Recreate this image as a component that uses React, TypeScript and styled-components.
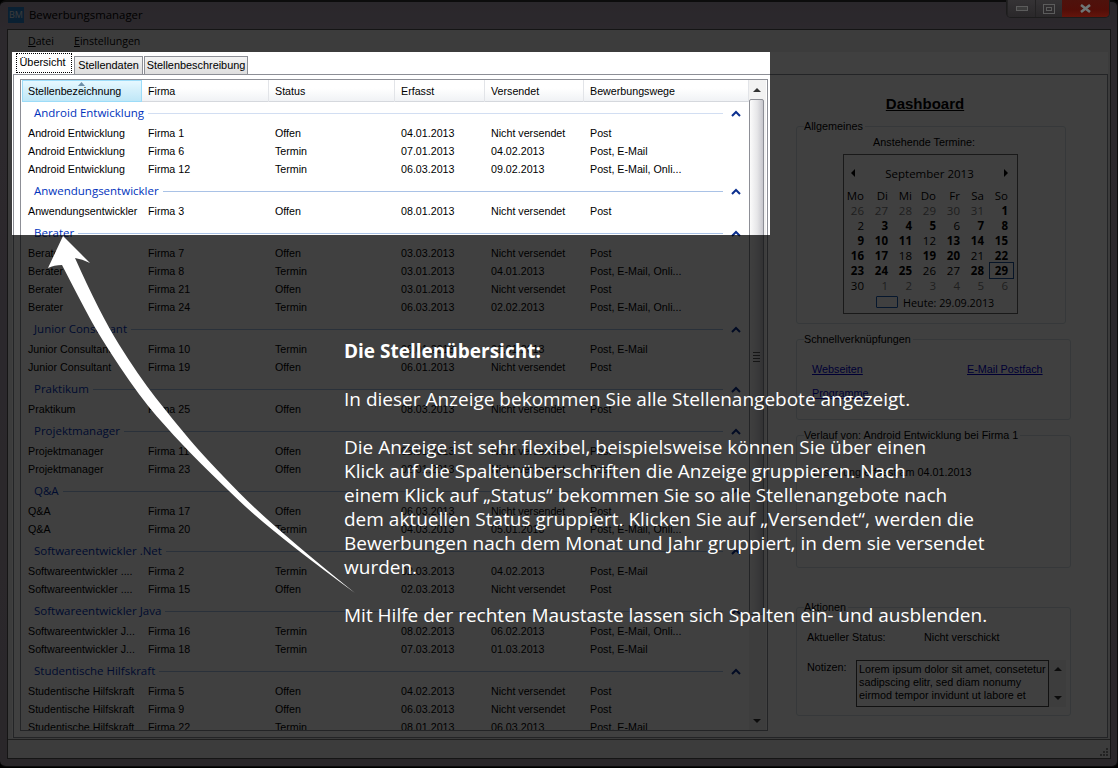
import React from 'react'
import styled, { createGlobalStyle } from 'styled-components'

const GlobalStyle = createGlobalStyle`
    html, body {
        margin: 0;
        background: #000;
    }
    body {
        font-family: "Liberation Sans", Arial, sans-serif;
        font-size: 10.7px;
        color: #000;
    }
`

const Screen = styled.div`
    position: relative;
    width: 1118px;
    height: 768px;
    overflow: hidden;
`

const Frame = styled.div`
    box-sizing: border-box;
    height: 767px;
    display: flex;
    flex-direction: column;
    padding: 0 6px 7px 7px;
    background: linear-gradient(#a89bab, #b0a3b4 30px, #a89ca8);
    border-radius: 6px;
    border: 1px solid #303030;
    border-left-width: 0;
    border-top-width: 2px;
`

const TitleBar = styled.div`
    height: 27px;
    display: flex;
    justify-content: space-between;
    align-items: flex-start;
`

const TitleLeft = styled.div`
    display: flex;
    align-items: center;
    gap: 5px;
    padding: 5px 0 0 1px;
    font-family: "Open Sans", sans-serif;
    font-size: 11.4px;
    line-height: 16px;
`

const AppIcon = styled.span`
    width: 16px;
    height: 16px;
    background: #2a7fc8;
    color: #e8e8e8;
    font-size: 9px;
    line-height: 16px;
    text-align: center;
`

const Controls = styled.div`
    position: relative;
    z-index: 2;
    display: flex;
    height: 17px;
    margin-top: -2px;
    margin-right: 1px;
    border: 1px solid #1c1c1c;
    border-top: 0;
    border-radius: 0 0 5px 5px;
    overflow: hidden;
`

const WinButton = styled.div<{ $w: number; $close?: boolean }>`
    width: ${p => p.$w}px;
    display: flex;
    align-items: center;
    justify-content: center;
    background: ${p => (p.$close ? 'linear-gradient(#4e120c, #520e08 55%, #64150c)' : 'linear-gradient(#353335, #2a282a)')};
    border-left: ${p => (p.$close ? '0' : '1px solid #232223')};
`

const Content = styled.div`
    flex: 1;
    display: flex;
    flex-direction: column;
    background: #f0f0f0;
    border: 1px solid #555;
    min-height: 0;
`

const MenuBar = styled.div`
    height: 22px;
    display: flex;
    align-items: center;
    gap: 20px;
    padding-left: 20px;
    font-family: "Open Sans", sans-serif;
    font-size: 10.6px;
`

const Body = styled.div`
    height: 686px;
    margin: 0 2px 0 4px;
    padding-left: 1px;
    background: #fff;
    display: flex;
    flex-direction: column;
`

const TabStrip = styled.div`
    height: 22px;
    display: flex;
    align-items: flex-end;
    padding-left: 3px;
    gap: 1px;
`

const Tab = styled.div<{ $active?: boolean; $w: number }>`
    box-sizing: border-box;
    width: ${p => p.$w}px;
    height: ${p => (p.$active ? 20 : 19)}px;
    margin-right: ${p => (p.$active ? 1 : 0)}px;
    margin-bottom: ${p => (p.$active ? 1 : -1)}px;
    padding-right: ${p => (p.$active ? 3 : 0)}px;
    line-height: 17px;
    text-align: center;
    font-size: 10.9px;
    background: ${p => (p.$active ? '#fff' : 'linear-gradient(#f4f4f4, #dcdcdc)')};
    border: ${p => (p.$active ? '1px dotted #000' : '1.5px solid #8d8f96')};
    border-bottom: ${p => (p.$active ? '1px dotted #000' : '0')};
`

const TabPanel = styled.div`
    flex: 1;
    display: flex;
    border: 1px solid #8d8f96;
    min-height: 0;
`

const ListBox = styled.div`
    box-sizing: border-box;
    width: 748px;
    height: 652px;
    margin: 4px 0 0 6px;
    padding-left: 1px;
    display: flex;
    border: 1px solid #8d8f96;
    flex-shrink: 0;
`

const ListMain = styled.div`
    width: 727px;
    overflow: hidden;
`

const Columns = `
    display: grid;
    grid-template-columns: 120px 127px 126px 90px 99px 165px;
`

const HeaderRow = styled.div`
    ${Columns}
    height: 22px;
    background: linear-gradient(#fff, #fff 40%, #f0f2f5);
    border-bottom: 1px solid #d5d8dd;
    box-sizing: border-box;
`

const HeaderCell = styled.div<{ $sorted?: boolean }>`
    position: relative;
    box-sizing: border-box;
    padding-left: 6px;
    line-height: 22px;
    border-right: 1px solid #e2e4e8;
    ${p => p.$sorted && `
        background: linear-gradient(#e6f8ff, #d4f0fb 45%, #bfe7f7);
        border: 1px solid #9ddcf8;
        padding-left: 5px;
        line-height: 20px;
    `}
    &:last-child {
        border-right: 0;
    }
`

const SortMark = styled.svg`
    position: absolute;
    left: 55px;
    top: 1px;
    width: 7px;
    height: 4px;
`

const Group = styled.section`
    margin-bottom: 2px;
`

const GroupHead = styled.div`
    height: 22px;
    display: flex;
    align-items: center;
    padding-left: 12px;
`

const GroupTitle = styled.span`
    font-family: "Open Sans", sans-serif;
    font-size: 11.5px;
    line-height: 20px;
    margin: 0 4px 1px 0;
    color: #0033bc;
`

const GroupLine = styled.span<{ $first?: boolean }>`
    flex: 1;
    height: 1px;
    background: ${p => (p.$first ? '#d2def2' : '#a9c2e6')};
`

const ChevronSlot = styled.span`
    width: 26px;
    display: flex;
    justify-content: center;
`

const Row = styled.div`
    ${Columns}
    height: 18px;
    line-height: 18px;
`

const Cell = styled.div`
    padding-left: 6px;
    white-space: nowrap;
    overflow: hidden;
`

const ScrollTrack = styled.div`
    width: 17px;
    display: flex;
    flex-direction: column;
    align-items: flex-start;
    background: #f2f2f2;
`

const ScrollArrow = styled.div`
    width: 16px;
    height: 19px;
    display: flex;
    align-items: center;
    justify-content: center;
    flex-shrink: 0;
`

const ScrollThumb = styled.div`
    box-sizing: border-box;
    width: 15px;
    height: 516px;
    border: 1px solid #8d8f96;
    border-radius: 2px;
    background: linear-gradient(90deg, #fbfbfb, #e6e6e8 55%, #c6c6cc);
    display: flex;
    flex-direction: column;
    justify-content: center;
    align-items: center;
    gap: 2px;
    margin-bottom: auto;
`

const GripLine = styled.span`
    width: 7px;
    height: 1px;
    background: #555;
`

const SidePane = styled.div`
    flex: 1;
    padding-left: 28px;
    font-size: 10.8px;
`

const Heading = styled.div`
    width: 258px;
    margin-top: 21px;
    text-align: center;
    font-size: 15px;
    line-height: 16px;
    font-weight: bold;
    text-decoration: underline;
`

const Box = styled.div<{ $w: number; $h: number; $top: number }>`
    box-sizing: border-box;
    width: ${p => p.$w}px;
    height: ${p => p.$h}px;
    margin-top: ${p => p.$top}px;
    border: 1px solid #d5dfe5;
    border-radius: 3px;
`

const Legend = styled.div`
    width: fit-content;
    height: 14px;
    line-height: 14px;
    margin: -8px 0 0 7px;
    background: #fff;
    padding-right: 2px;
`

const CalendarLabel = styled.div`
    width: 162px;
    margin: 2px 0 0 46px;
    text-align: center;
    line-height: 14px;
`

const Calendar = styled.div`
    box-sizing: border-box;
    width: 175px;
    height: 160px;
    margin: 5px 0 0 46px;
    border: 1px solid #666;
    font-family: "Open Sans", sans-serif;
    font-size: 11.5px;
`

const CalendarNav = styled.div`
    height: 33px;
    display: flex;
    align-items: center;
    justify-content: space-between;
    padding: 3px 9px 0 7px;
    box-sizing: border-box;
`

const CalendarGrid = styled.div`
    display: grid;
    grid-template-columns: 20px repeat(6, 24px);
    grid-auto-rows: 15px;
    line-height: 15px;
    text-align: right;
`

const Day = styled.div<{ $muted?: boolean; $bold?: boolean; $today?: boolean }>`
    position: relative;
    white-space: nowrap;
    color: ${p => (p.$muted ? '#7c7c7c' : '#000')};
    font-weight: ${p => (p.$bold ? 700 : 400)};
    ${p => p.$today && `
        &::after {
            content: "";
            position: absolute;
            top: -1px;
            bottom: -1px;
            left: 5px;
            right: -6px;
            border: 1px solid #1a4f9c;
        }
    `}
`

const TodayRow = styled.div`
    height: 18px;
    display: flex;
    align-items: center;
    gap: 5px;
    padding-left: 32px;
    font-size: 10.8px;
`

const TodayMark = styled.span`
    box-sizing: border-box;
    width: 22px;
    height: 12px;
    border: 1px solid #1a5bb4;
    border-radius: 1px;
`

const LinkGrid = styled.div`
    display: grid;
    grid-template-columns: 155px auto;
    grid-auto-rows: 24px;
    align-items: center;
    padding: 11px 0 0 15px;
`

const LinkText = styled.a`
    color: #0000d0;
    text-decoration: underline;
`

const PlainLine = styled.div`
    margin: 23px 0 0 16px;
    line-height: 14px;
`

const StatusLine = styled.div`
    display: grid;
    grid-template-columns: 117px auto;
    margin: 16px 0 0 10px;
    line-height: 14px;
`

const NotesLine = styled.div`
    display: grid;
    grid-template-columns: 49px 193px 17px;
    margin: 16px 0 0 10px;
    line-height: 14px;
`

const NotesBox = styled.div`
    box-sizing: border-box;
    height: 47px;
    padding: 2px 0 0 2px;
    border: 1px solid #444;
    line-height: 13px;
    white-space: nowrap;
    overflow: hidden;
`

const NotesScroll = styled.div`
    height: 47px;
    background: #f2f2f2;
    display: flex;
    flex-direction: column;
    align-items: center;
    justify-content: space-between;
    padding: 7px 0;
    box-sizing: border-box;
`

const StatusBar = styled.div`
    flex: 1;
    display: flex;
    justify-content: flex-end;
    align-items: flex-end;
    padding: 0 1px 1px 0;
    border-top: 1px solid #7c7c7c;
    margin-top: 1px;
`

const Spotlight = styled.div`
    position: absolute;
    left: 12px;
    top: 52px;
    width: 758px;
    height: 183px;
    z-index: 1;
    box-shadow: 0 0 0 2000px rgba(0, 0, 0, 0.75);
`

const ArrowLayer = styled.svg`
    position: absolute;
    left: 0;
    top: 0;
    width: 1118px;
    height: 768px;
    z-index: 3;
    pointer-events: none;
`

const Callout = styled.div`
    position: absolute;
    left: 344px;
    top: 339px;
    z-index: 3;
    width: 680px;
    color: #fff;
    font-family: "Open Sans", sans-serif;
    font-size: 19px;
    line-height: 24px;
    white-space: nowrap;
    p {
        margin: 0 0 24px;
    }
    strong {
        font-weight: 700;
    }
`

type Job = [string, string, string, string, string, string]
type JobGroup = { name: string; rows: Job[] }

const NOT_SENT = 'Nicht versendet'
const ALL_WAYS = 'Post, E-Mail, Onli...'

const groups: JobGroup[] = [
    {
        name: 'Android Entwicklung',
        rows: [
            ['Android Entwicklung', 'Firma 1', 'Offen', '04.01.2013', NOT_SENT, 'Post'],
            ['Android Entwicklung', 'Firma 6', 'Termin', '07.01.2013', '04.02.2013', 'Post, E-Mail'],
            ['Android Entwicklung', 'Firma 12', 'Termin', '06.03.2013', '09.02.2013', ALL_WAYS],
        ],
    },
    {
        name: 'Anwendungsentwickler',
        rows: [['Anwendungsentwickler', 'Firma 3', 'Offen', '08.01.2013', NOT_SENT, 'Post']],
    },
    {
        name: 'Berater',
        rows: [
            ['Berater', 'Firma 7', 'Offen', '03.03.2013', NOT_SENT, 'Post'],
            ['Berater', 'Firma 8', 'Termin', '03.01.2013', '04.01.2013', ALL_WAYS],
            ['Berater', 'Firma 21', 'Offen', '03.01.2013', NOT_SENT, 'Post'],
            ['Berater', 'Firma 24', 'Termin', '06.03.2013', '02.02.2013', ALL_WAYS],
        ],
    },
    {
        name: 'Junior Consultant',
        rows: [
            ['Junior Consultant', 'Firma 10', 'Termin', '09.01.2013', '01.01.2013', 'Post, E-Mail'],
            ['Junior Consultant', 'Firma 19', 'Offen', '06.01.2013', NOT_SENT, 'Post'],
        ],
    },
    {
        name: 'Praktikum',
        rows: [['Praktikum', 'Firma 25', 'Offen', '08.03.2013', NOT_SENT, 'Post']],
    },
    {
        name: 'Projektmanager',
        rows: [
            ['Projektmanager', 'Firma 11', 'Offen', '03.01.2013', NOT_SENT, 'Post'],
            ['Projektmanager', 'Firma 23', 'Offen', '02.01.2013', NOT_SENT, 'Post'],
        ],
    },
    {
        name: 'Q&A',
        rows: [
            ['Q&A', 'Firma 17', 'Offen', '06.03.2013', NOT_SENT, 'Post'],
            ['Q&A', 'Firma 20', 'Termin', '04.03.2013', '05.01.2013', ALL_WAYS],
        ],
    },
    {
        name: 'Softwareentwickler .Net',
        rows: [
            ['Softwareentwickler ....', 'Firma 2', 'Termin', '02.03.2013', '04.02.2013', 'Post, E-Mail'],
            ['Softwareentwickler ....', 'Firma 15', 'Offen', '02.03.2013', NOT_SENT, 'Post'],
        ],
    },
    {
        name: 'Softwareentwickler Java',
        rows: [
            ['Softwareentwickler J...', 'Firma 16', 'Termin', '08.02.2013', '06.02.2013', ALL_WAYS],
            ['Softwareentwickler J...', 'Firma 18', 'Termin', '07.03.2013', '01.03.2013', 'Post, E-Mail'],
        ],
    },
    {
        name: 'Studentische Hilfskraft',
        rows: [
            ['Studentische Hilfskraft', 'Firma 5', 'Offen', '04.02.2013', NOT_SENT, 'Post'],
            ['Studentische Hilfskraft', 'Firma 9', 'Offen', '06.03.2013', NOT_SENT, 'Post'],
            ['Studentische Hilfskraft', 'Firma 22', 'Termin', '08.01.2013', '06.03.2013', 'Post, E-Mail'],
        ],
    },
]

const columns = ['Stellenbezeichnung', 'Firma', 'Status', 'Erfasst', 'Versendet', 'Bewerbungswege']
const weekDays = ['Mo', 'Di', 'Mi', 'Do', 'Fr', 'Sa', 'So']
const calendarDays = [26, 27, 28, 29, 30, 31, 1, 2, 3, 4, 5, 6, 7, 8, 9, 10, 11, 12, 13, 14, 15, 16, 17, 18, 19, 20, 21, 22, 23, 24, 25, 26, 27, 28, 29, 30, 1, 2, 3, 4, 5, 6]
const boldDays = [1, 3, 4, 5, 7, 8, 9, 10, 11, 13, 14, 15, 16, 17, 19, 20, 22, 23, 24, 25, 28, 29]

// rounds a list of points into a curve, passing midway between them
const smooth = (pts: number[][]) =>
    pts.slice(1, -1).map((p, i) => {
        const next = pts[i + 2]
        const last = i === pts.length - 3
        const x = last ? next[0] : (p[0] + next[0]) / 2
        const y = last ? next[1] : (p[1] + next[1]) / 2
        return `Q${p[0]} ${p[1]} ${x} ${y}`
    }).join(' ')

const arrowRight = [[75, 258], [100, 314], [138, 375], [173, 420], [207, 460], [273, 527], [355, 593]]
const arrowLeft = [[355, 593], [273, 533], [207, 470], [173, 435], [140, 397], [100, 337], [80, 300], [62, 265]]
const arrowPath = `M63 236 L90 263 Q82 259 75 258 ${smooth(arrowRight)} ${smooth(arrowLeft)} Q54 265 48 268 Z`

const Chevron = () => (
    <svg width="10" height="7" viewBox="0 0 10 7">
        <path d="M1 6 L5 2 L9 6" fill="none" stroke="#0b2f8f" strokeWidth="2" />
    </svg>
)

const Triangle = ({ dir, color = '#333' }: { dir: 'up' | 'down' | 'left' | 'right'; color?: string }) => {
    const points = {
        up: '0,4 4,0 8,4',
        down: '0,0 8,0 4,4',
        left: '4,0 4,8 0,4',
        right: '0,0 0,8 4,4',
    }[dir]
    const vertical = dir === 'up' || dir === 'down'
    return (
        <svg width={vertical ? 8 : 4} height={vertical ? 4 : 8}>
            <polygon points={points} fill={color} />
        </svg>
    )
}

export default function App() {
    return (
        <Screen>
            <GlobalStyle />
            <Frame>
                <TitleBar>
                    <TitleLeft>
                        <AppIcon>BM</AppIcon>
                        Bewerbungsmanager
                    </TitleLeft>
                    <Controls>
                        <WinButton $w={27}>
                            <svg width="12" height="5"><rect x="0.5" y="0.5" width="11" height="4" fill="#3c3c3c" stroke="#5c5c5c" /></svg>
                        </WinButton>
                        <WinButton $w={26}>
                            <svg width="12" height="10"><rect x="0.5" y="0.5" width="11" height="9" fill="none" stroke="#5c5c5c" /><rect x="3.5" y="3.5" width="5" height="3" fill="none" stroke="#5c5c5c" /></svg>
                        </WinButton>
                        <WinButton $w={47} $close>
                            <svg width="11" height="9"><path d="M1 1 L10 8 M10 1 L1 8" stroke="#6f7676" strokeWidth="2.6" /></svg>
                        </WinButton>
                    </Controls>
                </TitleBar>
                <Content>
                    <MenuBar>
                        <span><u>D</u>atei</span>
                        <span><u>E</u>instellungen</span>
                    </MenuBar>
                    <Body>
                        <TabStrip>
                            <Tab $active $w={56}>Übersicht</Tab>
                            <Tab $w={69}>Stellendaten</Tab>
                            <Tab $w={104}>Stellenbeschreibung</Tab>
                        </TabStrip>
                        <TabPanel>
                            <ListBox>
                                <ListMain>
                                    <HeaderRow>
                                        {columns.map((title, i) => (
                                            <HeaderCell key={title} $sorted={i === 0}>
                                                {i === 0 && (
                                                    <SortMark viewBox="0 0 7 4">
                                                        <polygon points="0,4 3.5,0 7,4" fill="#6d8fa8" />
                                                    </SortMark>
                                                )}
                                                {title}
                                            </HeaderCell>
                                        ))}
                                        <HeaderCell />
                                    </HeaderRow>
                                    {groups.map((group, g) => (
                                        <Group key={group.name}>
                                            <GroupHead>
                                                <GroupTitle>{group.name}</GroupTitle>
                                                <GroupLine $first={g === 0} />
                                                <ChevronSlot><Chevron /></ChevronSlot>
                                            </GroupHead>
                                            {group.rows.map(row => (
                                                <Row key={row[1]}>
                                                    {row.map((text, i) => <Cell key={i}>{text}</Cell>)}
                                                </Row>
                                            ))}
                                        </Group>
                                    ))}
                                </ListMain>
                                <ScrollTrack>
                                    <ScrollArrow><Triangle dir="up" /></ScrollArrow>
                                    <ScrollThumb>
                                        <GripLine />
                                        <GripLine />
                                        <GripLine />
                                        <GripLine />
                                    </ScrollThumb>
                                    <ScrollArrow><Triangle dir="down" /></ScrollArrow>
                                </ScrollTrack>
                            </ListBox>
                            <SidePane>
                                <Heading>Dashboard</Heading>
                                <Box $w={270} $h={198} $top={14}>
                                    <Legend>Allgemeines</Legend>
                                    <CalendarLabel>Anstehende Termine:</CalendarLabel>
                                    <Calendar>
                                        <CalendarNav>
                                            <Triangle dir="left" color="#000" />
                                            September 2013
                                            <Triangle dir="right" color="#000" />
                                        </CalendarNav>
                                        <CalendarGrid>
                                            {weekDays.map(day => <Day key={day}>{day}</Day>)}
                                            {calendarDays.map((day, i) => {
                                                const inMonth = i >= 6 && i < 36
                                                return (
                                                    <Day
                                                        key={i}
                                                        $muted={!inMonth}
                                                        $bold={inMonth && boldDays.includes(day)}
                                                        $today={inMonth && day === 29}
                                                    >
                                                        {day}
                                                    </Day>
                                                )
                                            })}
                                        </CalendarGrid>
                                        <TodayRow>
                                            <TodayMark />
                                            Heute: 29.09.2013
                                        </TodayRow>
                                    </Calendar>
                                </Box>
                                <Box $w={275} $h={81} $top={15}>
                                    <Legend>Schnellverknüpfungen</Legend>
                                    <LinkGrid>
                                        <LinkText>Webseiten</LinkText>
                                        <LinkText>E-Mail Postfach</LinkText>
                                        <LinkText>Programme</LinkText>
                                    </LinkGrid>
                                </Box>
                                <Box $w={275} $h={133} $top={15}>
                                    <Legend>Verlauf von: Android Entwicklung bei Firma 1</Legend>
                                    <PlainLine>Erstellung erfasst am 04.01.2013</PlainLine>
                                </Box>
                                <Box $w={275} $h={109} $top={39}>
                                    <Legend>Aktionen</Legend>
                                    <StatusLine>
                                        <span>Aktueller Status:</span>
                                        <span>Nicht verschickt</span>
                                    </StatusLine>
                                    <NotesLine>
                                        <span>Notizen:</span>
                                        <NotesBox>
                                            Lorem ipsum dolor sit amet, consetetur<br />
                                            sadipscing elitr, sed diam nonumy<br />
                                            eirmod tempor invidunt ut labore et
                                        </NotesBox>
                                        <NotesScroll>
                                            <Triangle dir="up" />
                                            <Triangle dir="down" />
                                        </NotesScroll>
                                    </NotesLine>
                                </Box>
                            </SidePane>
                        </TabPanel>
                    </Body>
                    <StatusBar>
                        <svg width="10" height="10" viewBox="0 0 10 10">
                            <g fill="#888">
                                <rect x="7" y="1" width="2" height="2" />
                                <rect x="4" y="4" width="2" height="2" />
                                <rect x="7" y="4" width="2" height="2" />
                                <rect x="1" y="7" width="2" height="2" />
                                <rect x="4" y="7" width="2" height="2" />
                                <rect x="7" y="7" width="2" height="2" />
                            </g>
                        </svg>
                    </StatusBar>
                </Content>
            </Frame>
            <Spotlight />
            <ArrowLayer viewBox="0 0 1118 768">
                <path fill="#fff" d={arrowPath} />
            </ArrowLayer>
            <Callout>
                <p><strong>Die Stellenübersicht:</strong></p>
                <p>In dieser Anzeige bekommen Sie alle Stellenangebote angezeigt.</p>
                <p>
                    Die Anzeige ist sehr flexibel, beispielsweise können Sie über einen<br />
                    Klick auf die Spaltenüberschriften die Anzeige gruppieren. Nach<br />
                    einem Klick auf „Status“ bekommen Sie so alle Stellenangebote nach<br />
                    dem aktuellen Status gruppiert. Klicken Sie auf „Versendet“, werden die<br />
                    Bewerbungen nach dem Monat und Jahr gruppiert, in dem sie versendet<br />
                    wurden.
                </p>
                <p>Mit Hilfe der rechten Maustaste lassen sich Spalten ein- und ausblenden.</p>
            </Callout>
        </Screen>
    )
}
